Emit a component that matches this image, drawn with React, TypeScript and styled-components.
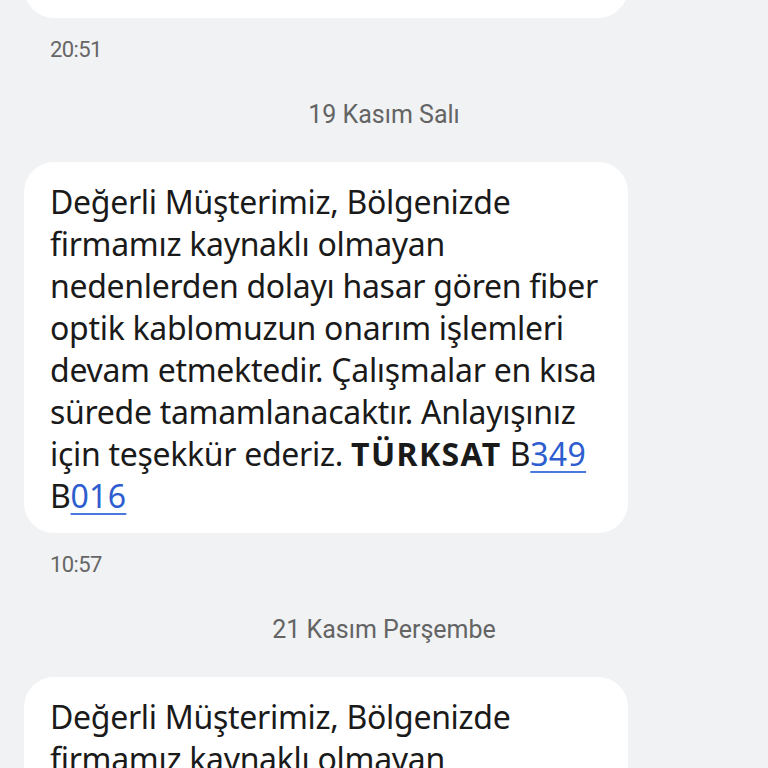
import React from "react";
import styled, { createGlobalStyle } from "styled-components";

const Global = createGlobalStyle`
  html, body { margin: 0; padding: 0; background: #f1f2f4; overflow: hidden; }
  body { font-family: "Noto Sans", Roboto, sans-serif; }
`;

const Screen = styled.div`
  width: 768px;
  height: 768px;
  overflow: hidden;
  background: #f1f2f4;
`;

const Thread = styled.div`
  display: flex;
  flex-direction: column;
  margin-top: -353px;
  padding: 0 24px;
`;

const Bubble = styled.div`
  width: 604px;
  box-sizing: border-box;
  background: #ffffff;
  border-radius: 30px;
  padding: 19px 26px 16px;
  font-family: "Noto Sans", Roboto, sans-serif;
  font-size: 32px;
  letter-spacing: -0.3px;
  line-height: 42px;
  color: #1a1a1a;
  white-space: nowrap;
`;

const Bold = styled.b`
  font-weight: 700;
  letter-spacing: 1.4px;
`;

const Link = styled.span`
  color: #2d5dcf;
  letter-spacing: 0.3px;
  text-decoration: underline;
  text-decoration-color: #4a78de;
  text-decoration-thickness: 2px;
  text-underline-offset: 5px;
`;

const Time = styled.div`
  margin: 18px 0 0 26px;
  font-family: Roboto, "Noto Sans", sans-serif;
  font-size: 22px;
  letter-spacing: -0.6px;
  line-height: 28px;
  color: #666666;
`;

const DateLabel = styled.div`
  margin: 35px 0 31px;
  text-align: center;
  font-family: Roboto, "Noto Sans", sans-serif;
  font-size: 25px;
  line-height: 32px;
  color: #646464;
`;

const Message = () => (
  <Bubble>
    Değerli Müşterimiz, Bölgenizde
    <br />
    firmamız kaynaklı olmayan
    <br />
    nedenlerden dolayı hasar gören fiber
    <br />
    optik kablomuzun onarım işlemleri
    <br />
    devam etmektedir. Çalışmalar en kısa
    <br />
    sürede tamamlanacaktır. Anlayışınız
    <br />
    için teşekkür ederiz. <Bold>TÜRKSAT</Bold> B<Link>349</Link>
    <br />
    B<Link>016</Link>
  </Bubble>
);

export default function App() {
  return (
    <Screen>
      <Global />
      <Thread>
        <Message />
        <Time>20:51</Time>
        <DateLabel>19 Kasım Salı</DateLabel>
        <Message />
        <Time>10:57</Time>
        <DateLabel>21 Kasım Perşembe</DateLabel>
        <Message />
      </Thread>
    </Screen>
  );
}
